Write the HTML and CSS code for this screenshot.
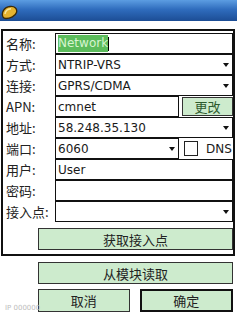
FILE: index.html
```html
<!DOCTYPE html>
<html lang="zh">
<head>
    <meta charset="UTF-8">
    <meta name="viewport" content="width=device-width, initial-scale=1.0">
    <title>Network</title>
    <link rel="stylesheet" href="styles.css">
</head>
<body>

    <div class="screen">
        <div class="titlebar">
            <svg class="app-icon" width="17" height="15" viewBox="0 0 17 15">
                <path d="M2 12 C0 8 3 2 9 1.5 C14 1 16.5 4 15.5 7.5 C14.5 11 9 13.5 5 13.5 C3.5 13.5 2.5 13 2 12 Z" fill="#e5b330" stroke="#3a2a08" stroke-width="1.3"/>
                <path d="M4 9 C4.5 6 7 4 10 3.8" fill="none" stroke="#f8e7a0" stroke-width="1.4"/>
            </svg>
        </div>

        <div class="group">
            <div class="row">
                <span class="label">名称:</span>
                <div class="field"><span class="selected">Network</span><span class="caret"></span></div>
            </div>
            <div class="row">
                <span class="label">方式:</span>
                <div class="field combo">NTRIP-VRS<i class="arrow"></i></div>
            </div>
            <div class="row">
                <span class="label">连接:</span>
                <div class="field combo">GPRS/CDMA<i class="arrow"></i></div>
            </div>
            <div class="row">
                <span class="label">APN:</span>
                <div class="field short">cmnet</div>
                <button class="btn change">更改</button>
            </div>
            <div class="row">
                <span class="label">地址:</span>
                <div class="field combo">58.248.35.130<i class="arrow"></i></div>
            </div>
            <div class="row">
                <span class="label">端口:</span>
                <div class="field combo short">6060<i class="arrow"></i></div>
                <span class="checkbox"></span>
                <span class="dns">DNS</span>
            </div>
            <div class="row">
                <span class="label">用户:</span>
                <div class="field">User</div>
            </div>
            <div class="row">
                <span class="label">密码:</span>
                <div class="field"></div>
            </div>
            <div class="row">
                <span class="label">接入点:</span>
                <div class="field combo"><i class="arrow"></i></div>
            </div>

            <button class="btn wide">获取接入点</button>
        </div>

        <button class="btn wide outside">从模块读取</button>

        <div class="actions">
            <button class="btn">取消</button>
            <button class="btn default">确定</button>
        </div>

        <div class="watermark">IP 000000</div>
    </div>

</body>
</html>
```

FILE: styles.css
```css
body {
    margin: 0;
    background-color: #fff;
    font-family: "DejaVu Sans", "Noto Sans CJK SC", sans-serif;
    font-size: 12px;
    color: #1a1a1a;
}
.screen {
    width: 240px;
    height: 319px;
    position: relative;
    overflow: hidden;
}
.titlebar {
    height: 21px;
    width: 237px;
    background: linear-gradient(to bottom, #5c9de2 0%, #2f6cbd 45%, #1c4d95 100%);
    display: flex;
    align-items: center;
    padding-left: 1px;
    box-sizing: border-box;
}
.app-icon {
    display: block;
    margin-top: 3px;
}
.group {
    margin: 8px 0 0 1px;
    width: 234px;
    border: 2px solid #111;
    box-sizing: border-box;
    padding: 2px 0 4px 0;
}
.row {
    display: flex;
    align-items: center;
    height: 21px;
}
.label {
    width: 49px;
    padding-left: 3px;
    font-family: "Noto Sans CJK SC", sans-serif;
    font-size: 13px;
    line-height: 21px;
    color: #222;
    flex-shrink: 0;
}
.field {
    flex: 1;
    height: 21px;
    border: 1px solid #111;
    box-sizing: border-box;
    display: flex;
    align-items: center;
    padding-left: 2px;
    position: relative;
    font-size: 12px;
}
.field.short {
    flex: 0 0 124px;
}
.selected {
    background-color: #5cbc5c;
    color: #d6f4d0;
    padding: 1px 0;
    line-height: 15px;
}
.caret {
    width: 1px;
    height: 14px;
    background-color: #000;
}
.arrow {
    position: absolute;
    right: 3px;
    top: 8px;
    width: 0;
    height: 0;
    border-left: 3.5px solid transparent;
    border-right: 3.5px solid transparent;
    border-top: 4px solid #111;
}
.btn {
    font-family: "Noto Sans CJK SC", sans-serif;
    font-size: 13px;
    color: #222;
    background-color: #cdebcd;
    border: 1px solid #333;
    padding: 0;
    box-sizing: border-box;
}
.btn.change {
    margin-left: 3px;
    width: 52px;
    height: 19px;
    line-height: 17px;
    color: #2d5a2d;
}
.checkbox {
    width: 14px;
    height: 15px;
    border: 1px solid #222;
    box-sizing: border-box;
    margin-left: 5px;
    background-color: #fff;
}
.dns {
    margin-left: 8px;
    font-size: 12px;
}
.btn.wide {
    display: block;
    width: 195px;
    height: 22px;
    margin: 6px 0 0 35px;
}
.btn.outside {
    margin: 6px 0 0 38px;
}
.actions {
    display: flex;
    gap: 10px;
    margin: 5px 0 0 38px;
    width: 195px;
}
.actions .btn {
    flex: 1;
    height: 23px;
}
.btn.default {
    border: 2px solid #111;
}
.watermark {
    position: absolute;
    left: 5px;
    bottom: 7px;
    font-size: 7px;
    color: #bdbdbd;
}
```
